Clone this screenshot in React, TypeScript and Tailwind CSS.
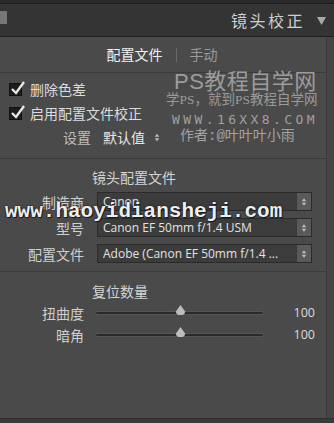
import React from 'react';

const font = { fontFamily: '"Noto Sans CJK SC", "Liberation Sans", sans-serif' };

function Check() {
  return (
    <div className="relative w-[13px] h-[13px] bg-[#1c1c1c] border border-[#111]">
      <svg viewBox="0 0 16 16" className="absolute -top-[4px] left-[0px] w-[16px] h-[16px]">
        <path d="M2 9 L6 13 L14 2" fill="none" stroke="#e8e8e8" strokeWidth="2.4" />
      </svg>
    </div>
  );
}

function Stepper() {
  return (
    <div className="w-[15px] self-stretch flex flex-col items-center justify-center bg-[#5a5a5a] border-l border-[#3a3a3a]">
      <svg viewBox="0 0 8 12" className="w-[6px] h-[10px]">
        <path d="M1 5 L4 1 L7 5 Z M1 7 L4 11 L7 7 Z" fill="#bdbdbd" />
      </svg>
    </div>
  );
}

function Select({ label, value }: { label: string; value: string }) {
  return (
    <div className="flex items-center h-[19px]">
      <div className="w-[86px] pr-[2px] text-right text-[14px] text-[#cfcfcf] leading-none">{label}</div>
      <div className="ml-[11px] w-[215px] h-[19px] flex items-center bg-[#3c3c3c] border border-[#2b2b2b]">
        <div className="flex-1 min-w-0 pl-[5px] text-[12px] text-[#e2e2e2] leading-[17px] whitespace-nowrap" style={{ fontFamily: '"Open Sans", "Noto Sans CJK SC", sans-serif' }}>{value}</div>
        <Stepper />
      </div>
    </div>
  );
}

function Slider({ label }: { label: string }) {
  return (
    <div className="flex items-center h-[20px]">
      <div className="w-[86px] pr-[2px] text-right text-[14px] text-[#cfcfcf] leading-none">{label}</div>
      <div className="relative ml-[9px] w-[169px] h-[4px] rounded-full bg-[#2a2a2a] border border-[#555]">
        <svg viewBox="0 0 12 12" className="absolute left-[79px] -top-[7px] w-[11px] h-[11px]">
          <path d="M6 0 L11 7 Q11 11 6 11 Q1 11 1 7 Z" fill="#bdbdbd" />
        </svg>
      </div>
      <div className="ml-auto mr-[11px] text-[12.5px] text-[#dcdcdc] leading-none" style={{ fontFamily: '"Open Sans", sans-serif' }}>100</div>
    </div>
  );
}

export default function App() {
  return (
    <div className="relative w-[334px] h-[423px] bg-[#4a4a4a] overflow-hidden" style={font}>
      <div className="h-[4px] bg-[#2a2a2a] border-b border-[#1e1e1e]" />
      <div className="relative h-[33px] bg-[#343434] border-b border-[#1f1f1f] flex items-center justify-end pr-[8px]">
        <div className="absolute left-0 top-[7px] w-[7px] h-[13px] bg-[#777]" />
        <div className="text-[16px] text-[#cfcfcf] tracking-[2.5px]">镜头校正</div>
        <svg viewBox="0 0 10 10" className="ml-[12px] w-[9px] h-[9px]">
          <path d="M0 1 L10 1 L5 10 Z" fill="#a8a8a8" />
        </svg>
      </div>

      <div className="flex">
        <div className="flex-1">
          <div className="h-[36px] flex items-center justify-center border-b border-[#3b3b3b]">
            <span className="text-[14px] text-[#f0f0f0]">配置文件</span>
            <span className="mx-[13px] w-[1px] h-[14px] bg-[#6a6a6a]" />
            <span className="text-[14px] text-[#9a9a9a] mr-[2px]">手动</span>
          </div>

          <div className="pl-[9px] pt-[9px] flex flex-col gap-[10px]">
            <div className="flex items-center gap-[8px]">
              <Check />
              <span className="text-[14px] text-[#dcdcdc] leading-none">删除色差</span>
            </div>
            <div className="flex items-center gap-[8px]">
              <Check />
              <span className="text-[14px] text-[#dcdcdc] leading-none">启用配置文件校正</span>
            </div>
          </div>
          <div className="flex items-center h-[22px] mt-[6px] pl-[63px]">
            <span className="text-[14px] text-[#bdbdbd]">设置</span>
            <span className="ml-[12px] text-[14px] text-[#e6e6e6]">默认值</span>
            <svg viewBox="0 0 8 12" className="ml-[9px] w-[6px] h-[9px]">
              <path d="M1 5 L4 1 L7 5 Z M1 7 L4 11 L7 7 Z" fill="#bdbdbd" />
            </svg>
          </div>

          <div className="mt-[10px] border-t border-[#3b3b3b]" />
          <div className="pl-[92px] pt-[8px] text-[14px] text-[#d4d4d4] leading-[20px]">镜头配置文件</div>
          <div className="mt-[5px] flex flex-col gap-[7px]">
            <Select label="制造商" value="Canon" />
            <Select label="型号" value="Canon EF 50mm f/1.4 USM" />
            <Select label="配置文件" value="Adobe (Canon EF 50mm f/1.4 ..." />
          </div>

          <div className="mt-[8px] border-t border-[#3b3b3b]" />
          <div className="pl-[92px] pt-[9px] text-[14px] text-[#d4d4d4] leading-[20px]">复位数量</div>
          <div className="mt-[2px] flex flex-col gap-[2px]">
            <Slider label="扭曲度" />
            <Slider label="暗角" />
          </div>
        </div>
        <div className="w-[8px] border-l border-[#3a3a3a] bg-[#454545] h-[386px]" />
      </div>

      <div className="absolute left-0 right-0 bottom-0 h-[5px] bg-[#3a3a3a] border-t border-[#2e2e2e]" />

      {/* watermarks */}
      <div className="absolute left-[174px] top-[71px] whitespace-nowrap text-[22px] text-[#9c9c9c] leading-none tracking-[0.5px]" style={{ fontFamily: '"Liberation Sans", "Noto Sans CJK SC", sans-serif' }}>PS教程自学网</div>
      <div className="absolute left-[166px] top-[93px] whitespace-nowrap text-[13.5px] text-[#9a9a9a] leading-none" style={{ fontFamily: '"Liberation Serif", "Noto Sans CJK SC", serif' }}>学PS，就到PS教程自学网</div>
      <div className="absolute left-[172px] top-[113px] whitespace-nowrap text-[13px] text-[#a0a0a0] leading-none tracking-[3.4px]" style={{ fontFamily: '"DejaVu Sans Mono", monospace' }}>WWW.16XX8.COM</div>
      <div className="absolute left-[180px] top-[129px] whitespace-nowrap text-[14px] text-[#a3a3a3] leading-none" style={{ fontFamily: '"Liberation Mono", "Noto Sans CJK SC", monospace' }}>作者:@叶叶叶小雨</div>
      <div className="absolute left-[5px] top-[201px] whitespace-nowrap text-[21px] font-bold text-[#eeeeee] leading-none" style={{ fontFamily: '"Liberation Mono", monospace', textShadow: '0 0 2px #000, 1px 1px 0 #222' }}>www.haoyidiansheji.com</div>
    </div>
  );
}
